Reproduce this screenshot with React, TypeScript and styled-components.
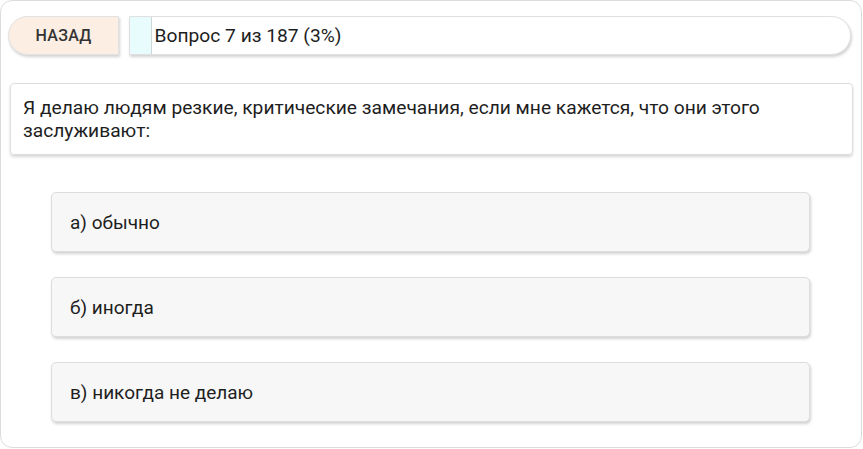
import { FC } from "react";
import styled, { createGlobalStyle } from "styled-components";

const GlobalStyle = createGlobalStyle`
  * {
    box-sizing: border-box;
  }
  body {
    margin: 0;
    background: #ffffff;
    font-family: Roboto, "Noto Sans", sans-serif;
    color: #222;
  }
`;

const Frame = styled.div`
  width: 862px;
  height: 448px;
  border: 1px solid #dcdcdc;
  border-radius: 12px;
  background: #fff;
  padding: 15px 10px 0 7px;
  display: flex;
  flex-direction: column;
`;

const TopBar = styled.div`
  display: flex;
  align-items: stretch;
  gap: 10px;
  height: 39px;
`;

const BackButton = styled.button`
  width: 111px;
  border: 1px solid #e2e2e2;
  border-radius: 20px 0 0 20px;
  background: #fdeee3;
  box-shadow: 1px 2px 3px rgba(0, 0, 0, 0.18);
  font-family: Roboto, sans-serif;
  font-size: 16px;
  font-weight: 500;
  letter-spacing: 0.3px;
  color: #333;
  text-transform: uppercase;
  cursor: pointer;
  padding: 0;
`;

const Progress = styled.div`
  flex: 1;
  display: flex;
  align-items: stretch;
  border: 1px solid #e0e0e0;
  border-radius: 0 20px 20px 0;
  background: #fff;
  box-shadow: 1px 2px 3px rgba(0, 0, 0, 0.18);
  overflow: hidden;
`;

const ProgressFill = styled.div`
  background: #e8fbfd;
  border-right: 1px solid #d0d6d6;
`;

const ProgressLabel = styled.span`
  display: flex;
  align-items: center;
  padding-left: 3px;
  font-size: 19.2px;
  color: #1e1e1e;
`;

const QuestionCard = styled.div`
  margin: 28px -2px 0 2px;
  border: 1px solid #dedede;
  border-radius: 4px;
  padding: 12px 12px;
  font-size: 19.2px;
  line-height: 23px;
  color: #1e1e1e;
  box-shadow: 0 2px 3px rgba(0, 0, 0, 0.16);
`;

const Answers = styled.div`
  margin: 37px 41px 0 43px;
  display: flex;
  flex-direction: column;
  gap: 25px;
`;

const Answer = styled.div`
  height: 60px;
  display: flex;
  align-items: center;
  padding-left: 18px;
  background: #f7f7f7;
  border: 1px solid #dddddd;
  border-radius: 5px;
  box-shadow: 1px 2px 3px rgba(0, 0, 0, 0.18);
  font-size: 19px;
  color: #1e1e1e;
  cursor: pointer;
`;

const answers = ["а) обычно", "б) иногда", "в) никогда не делаю"];

const current = 7;
const total = 187;

const App: FC = () => {
  const percent = Math.floor((current / total) * 100);

  return (
    <>
      <GlobalStyle />
      <Frame>
        <TopBar>
          <BackButton>Назад</BackButton>
          <Progress>
            <ProgressFill style={{ width: `${percent}%` }} />
            <ProgressLabel>
              Вопрос {current} из {total} ({percent}%)
            </ProgressLabel>
          </Progress>
        </TopBar>
        <QuestionCard>
          Я делаю людям резкие, критические замечания, если мне кажется, что
          они этого заслуживают:
        </QuestionCard>
        <Answers>
          {answers.map((answer) => (
            <Answer key={answer}>{answer}</Answer>
          ))}
        </Answers>
      </Frame>
    </>
  );
};

export default App;
